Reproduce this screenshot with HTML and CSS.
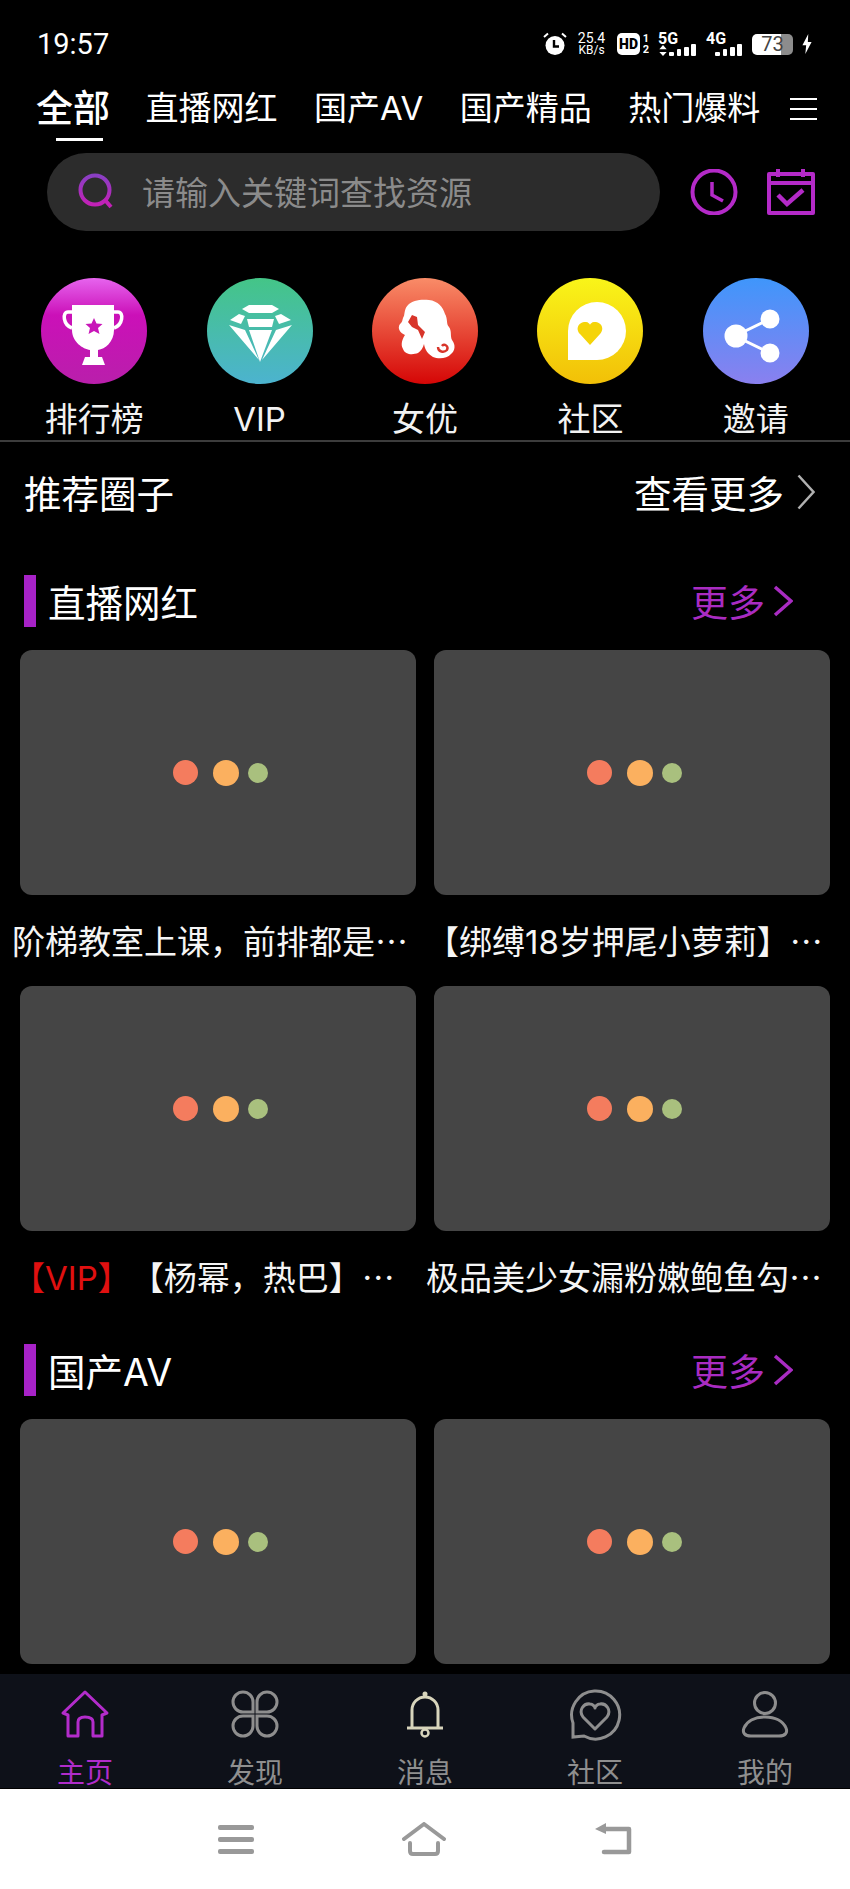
FILE: index.html
```html
<!DOCTYPE html>
<html lang="zh-CN">
<head>
    <meta charset="UTF-8">
    <meta name="viewport" content="width=device-width, initial-scale=1.0">
    <title>首页</title>
    <link rel="stylesheet" href="styles.css">
</head>
<body>

<!-- Status bar -->
<div class="status">
    <div class="time">19:57</div>
    <div class="status-right">
        <svg class="alarm" viewBox="0 0 24 24"><circle cx="12" cy="13.5" r="9.5" fill="#fff"/><path d="M1 5 L5 1.5 M23 5 L19 1.5" stroke="#fff" stroke-width="2"/><path d="M11 8 V14.5 H16" fill="none" stroke="#000" stroke-width="2.4"/></svg>
        <div class="speed"><span>25.4</span><span class="speed-unit">KB/s</span></div>
        <div class="hd">HD</div>
        <div class="sim"><span>1</span><span>2</span></div>
        <div class="net net-5g">
            <span class="net-name">5G</span>
            <div class="bars">
                <svg class="updown" viewBox="0 0 8 12"><path d="M4 0 L8 4.5 H0 Z M0 7.5 H8 L4 12 Z" fill="#fff"/></svg>
                <i class="b1"></i><i class="b2"></i><i class="b3"></i><i class="b4"></i>
            </div>
        </div>
        <div class="net net-4g">
            <span class="net-name">4G</span>
            <div class="bars"><i class="b1"></i><i class="b2"></i><i class="b3"></i><i class="b4"></i></div>
        </div>
        <div class="battery">73</div>
        <svg class="bolt" viewBox="0 0 12 24"><path d="M7.5 0 L0.5 13.5 H5 L4 24 L11.5 9.5 H7 Z" fill="#fff"/></svg>
    </div>
</div>

<!-- Category tabs -->
<div class="tabs">
    <div class="tab tab-active">全部</div>
    <div class="tab">直播网红</div>
    <div class="tab">国产AV</div>
    <div class="tab">国产精品</div>
    <div class="tab">热门爆料</div>
    <div class="tabs-menu"><i></i><i></i><i></i></div>
</div>

<!-- Search -->
<div class="search-row">
    <div class="search">
        <svg class="search-icon" viewBox="0 0 36 36"><defs><linearGradient id="sg" x1="0" y1="0" x2="0" y2="1"><stop offset="0" stop-color="#8a3fc4"/><stop offset="1" stop-color="#c221b6"/></linearGradient></defs><circle cx="17" cy="17" r="14.5" fill="none" stroke="url(#sg)" stroke-width="4"/><path d="M27 27 L33 34" stroke="#c221b6" stroke-width="4"/></svg>
        <span>请输入关键词查找资源</span>
    </div>
    <svg class="search-btn" viewBox="0 0 48 46"><circle cx="24" cy="23" r="21.5" fill="none" stroke="#b42ac8" stroke-width="4"/><path d="M22 13 V26 L33 32" fill="none" stroke="#b42ac8" stroke-width="3.5"/></svg>
    <svg class="search-btn search-btn-last" viewBox="0 0 48 46"><path d="M2 5 H46 V44 H2 Z M2 14 H46" fill="none" stroke="#b42ac8" stroke-width="4" stroke-linejoin="round"/><path d="M11 0 V8 M36 0 V8" stroke="#b42ac8" stroke-width="4"/><path d="M11 26 L20 35 L36 21" fill="none" stroke="#b42ac8" stroke-width="4.5"/></svg>
</div>

<div class="main">
    <!-- Shortcuts -->
    <div class="shortcuts">
        <div class="shortcut">
            <svg class="shortcut-icon" viewBox="0 0 106 106"><defs><linearGradient id="c1" x1="0" y1="0" x2="0" y2="1"><stop offset="0" stop-color="#e664ee"/><stop offset=".35" stop-color="#cb10b8"/><stop offset="1" stop-color="#b91fab"/></linearGradient></defs><circle cx="53" cy="53" r="53" fill="url(#c1)"/><path d="M31 27 H73 V52 C73 64 64 71 57 72 V79 H61 L64 87 H41 L44 79 H49 V72 C42 71 31 64 31 52 Z" fill="#fff"/><path d="M31 34 H27 C21 34 22 47 31 50 M73 34 H77 C83 34 82 47 73 50" fill="none" stroke="#fff" stroke-width="3.5"/><path d="M53 40 L55.5 45.5 L61.5 46 L57 50 L58.5 56 L53 53 L47.5 56 L49 50 L44.5 46 L50.5 45.5 Z" fill="#c815b8"/></svg>
            <div class="shortcut-label">排行榜</div>
        </div>
        <div class="shortcut">
            <svg class="shortcut-icon" viewBox="0 0 106 106"><defs><linearGradient id="c2" x1="0" y1="0" x2="0" y2="1"><stop offset="0" stop-color="#44c587"/><stop offset="1" stop-color="#4cb3cf"/></linearGradient></defs><circle cx="53" cy="53" r="53" fill="url(#c2)"/><path d="M35 31 L42 27 H65 L72 31 L65 35 H42 Z M32 36 L38 38 L34 46 L23 42 Z M74 36 L68 38 L72 46 L84 42 Z M40 41 H67 L65 49 H42 Z M42 52 H65 L53 84 Z M22 47 L38 52 L52 82 Z M85 47 L69 52 L55 82 Z" fill="#fff"/></svg>
            <div class="shortcut-label">VIP</div>
        </div>
        <div class="shortcut">
            <svg class="shortcut-icon" viewBox="0 0 106 106"><defs><linearGradient id="c3" x1="0" y1="0" x2="0" y2="1"><stop offset="0" stop-color="#f98c68"/><stop offset="1" stop-color="#d50606"/></linearGradient></defs><circle cx="53" cy="53" r="53" fill="url(#c3)"/><path d="M36 27 C40 22 50 21 57 22 C66 23 71 29 73 36 C76 41 74 46 77 49 C80 53 78 58 80 62 C84 67 83 73 79 76 C75 81 66 81 61 79 C56 76 53 72 52 66 C51 70 49 73 46 75 C41 77 33 77 31 71 C28 66 31 60 33 57 C28 55 25 50 28 46 C31 44 30 41 32 38 C33 33 33 30 36 27 Z" fill="#fff"/><path d="M40 37 L45 39 L46 47 L53 54 L50 61 L46 52 L40 49 L36 44 Z" fill="#d8352a"/><path d="M66 69 C66 74 72 75 75 72 C77 68 72 65 70 68" fill="none" stroke="#d8352a" stroke-width="2.4"/></svg>
            <div class="shortcut-label">女优</div>
        </div>
        <div class="shortcut">
            <svg class="shortcut-icon" viewBox="0 0 106 106"><defs><linearGradient id="c4" x1="0" y1="0" x2="0" y2="1"><stop offset="0" stop-color="#f9f519"/><stop offset="1" stop-color="#f2c007"/></linearGradient></defs><circle cx="53" cy="53" r="53" fill="url(#c4)"/><path d="M31 82 V53 A29 29 0 1 1 60 82 Z" fill="#fff"/><path d="M53 67 L43 56 C37 49 44 43 49 44 C51 44 53 46 53 47 C53 46 55 44 57 44 C62 43 69 49 63 56 Z" fill="#f5d409"/></svg>
            <div class="shortcut-label">社区</div>
        </div>
        <div class="shortcut">
            <svg class="shortcut-icon" viewBox="0 0 106 106"><defs><linearGradient id="c5" x1="0" y1="0" x2="0" y2="1"><stop offset="0" stop-color="#3f96fb"/><stop offset="1" stop-color="#8a80ef"/></linearGradient></defs><circle cx="53" cy="53" r="53" fill="url(#c5)"/><path d="M67 41 L32 58 L67 75" fill="none" stroke="#fff" stroke-width="3"/><circle cx="67" cy="41" r="9.5" fill="#fff"/><circle cx="33" cy="58" r="11.5" fill="#fff"/><circle cx="67" cy="75" r="9.5" fill="#fff"/></svg>
            <div class="shortcut-label">邀请</div>
        </div>
    </div>

    <!-- Recommended circles -->
    <div class="rec">
        <div class="rec-title">推荐圈子</div>
        <div class="rec-more">查看更多
            <svg class="rec-arrow" viewBox="0 0 18 36"><path d="M1.5 1.5 L16.5 18 L1.5 34.5" fill="none" stroke="#b0b0b0" stroke-width="2.5"/></svg>
        </div>
    </div>

    <!-- Section: live -->
    <div class="section-head">
        <div class="section-bar"></div>
        <div class="section-title">直播网红</div>
        <div class="section-more">更多
            <svg class="section-arrow" viewBox="0 0 20 32"><path d="M2 2 L18 16 L2 30" fill="none" stroke="#a92cc2" stroke-width="3.5"/></svg>
        </div>
    </div>
    <div class="cards">
        <div class="card">
            <div class="thumb"><i class="dot dot-a"></i><i class="dot dot-b"></i><i class="dot dot-c"></i></div>
            <div class="caption">阶梯教室上课，前排都是<span class="cut">…</span></div>
        </div>
        <div class="card">
            <div class="thumb"><i class="dot dot-a"></i><i class="dot dot-b"></i><i class="dot dot-c"></i></div>
            <div class="caption">【绑缚18岁押尾小萝莉】<span class="cut">…</span></div>
        </div>
        <div class="card">
            <div class="thumb"><i class="dot dot-a"></i><i class="dot dot-b"></i><i class="dot dot-c"></i></div>
            <div class="caption"><span class="red">【VIP】</span>【杨幂，热巴】<span class="cut">…</span></div>
        </div>
        <div class="card">
            <div class="thumb"><i class="dot dot-a"></i><i class="dot dot-b"></i><i class="dot dot-c"></i></div>
            <div class="caption">极品美少女漏粉嫩鲍鱼勾<span class="cut">…</span></div>
        </div>
    </div>

    <!-- Section: AV -->
    <div class="section-head">
        <div class="section-bar"></div>
        <div class="section-title">国产AV</div>
        <div class="section-more">更多
            <svg class="section-arrow" viewBox="0 0 20 32"><path d="M2 2 L18 16 L2 30" fill="none" stroke="#a92cc2" stroke-width="3.5"/></svg>
        </div>
    </div>
    <div class="cards">
        <div class="card">
            <div class="thumb"><i class="dot dot-a"></i><i class="dot dot-b"></i><i class="dot dot-c"></i></div>
        </div>
        <div class="card">
            <div class="thumb"><i class="dot dot-a"></i><i class="dot dot-b"></i><i class="dot dot-c"></i></div>
        </div>
    </div>
</div>

<!-- Bottom tabs -->
<div class="tabbar">
    <div class="tabbar-item tabbar-active">
        <svg class="tabbar-icon" viewBox="0 0 60 56"><path d="M13 29 L8 27 L30 6 L52 27 L47 29 V50 H38 V36 C38 32 34 31 30 31 C26 31 23 32 23 36 V50 H13 Z" fill="none" stroke="#b32ccb" stroke-width="3" stroke-linejoin="round"/></svg>
        <span>主页</span>
    </div>
    <div class="tabbar-item">
        <svg class="tabbar-icon" viewBox="0 0 60 56"><path d="M28 26 H18 A10 10 0 1 1 28 16 Z M32 26 V16 A10 10 0 1 1 42 26 Z M28 30 V40 A10 10 0 1 1 18 30 Z M32 30 H42 A10 10 0 1 1 32 40 Z" fill="none" stroke="#8e8e8e" stroke-width="3"/></svg>
        <span>发现</span>
    </div>
    <div class="tabbar-item">
        <svg class="tabbar-icon" viewBox="0 0 60 56"><path d="M17 41 V24 A13 13 0 0 1 43 24 V41 M12 42 H48" fill="none" stroke="#d8d5bc" stroke-width="3"/><circle cx="30" cy="8" r="2.5" fill="#d8d5bc"/><circle cx="30" cy="47" r="3.5" fill="none" stroke="#d8d5bc" stroke-width="2.5"/></svg>
        <span>消息</span>
    </div>
    <div class="tabbar-item">
        <svg class="tabbar-icon" viewBox="0 0 60 56"><path d="M8 51 V37 A24 24 0 1 1 19 50 Z" fill="none" stroke="#8e8e8e" stroke-width="3"/><path d="M30 43 L18 31 C13 24 19 17 25 18 C28 18 30 21 30 22 C30 21 32 18 35 18 C41 17 47 24 42 31 Z" fill="none" stroke="#8e8e8e" stroke-width="3" stroke-linejoin="round"/></svg>
        <span>社区</span>
    </div>
    <div class="tabbar-item">
        <svg class="tabbar-icon" viewBox="0 0 60 56"><circle cx="30" cy="17" r="10.5" fill="none" stroke="#8e8e8e" stroke-width="3"/><path d="M16 50 H44 C50 50 53 47 51 42 C48 35 40 31 30 31 C20 31 12 35 9 42 C7 47 10 50 16 50 Z" fill="none" stroke="#8e8e8e" stroke-width="3"/></svg>
        <span>我的</span>
    </div>
</div>

<!-- Phone navigation -->
<div class="navbar">
    <div class="nav-menu"><i></i><i></i><i></i></div>
    <svg class="nav-home" viewBox="0 0 44 34"><path d="M2 17 L22 2 L42 17" fill="none" stroke="#999" stroke-width="4" stroke-linecap="round" stroke-linejoin="round"/><path d="M8 21 V29 Q8 32 11 32 H33 Q36 32 36 29 V21" fill="none" stroke="#999" stroke-width="4" stroke-linecap="round"/></svg>
    <svg class="nav-back" viewBox="0 0 38 32"><path d="M10 6 H35 V29 H10" fill="none" stroke="#999" stroke-width="4.5" stroke-linecap="round" stroke-linejoin="round"/><path d="M1 6 L12 0 V11 Z" fill="#999"/></svg>
</div>

</body>
</html>
```

FILE: styles.css
```css
* {
    box-sizing: border-box;
}
body {
    margin: 0;
    width: 850px;
    height: 1889px;
    overflow: hidden;
    display: flex;
    flex-direction: column;
    background-color: #000;
    color: #fff;
    font-family: Inter, "Noto Sans CJK SC", sans-serif;
    text-spacing-trim: space-all;
}
i {
    display: block;
}

/* Status bar */
.status {
    height: 72px;
    flex-shrink: 0;
    padding: 16px 38px 0 37px;
    display: flex;
    align-items: center;
    font-family: Roboto, sans-serif;
}
.time {
    font-size: 29px;
}
.status-right {
    margin-left: auto;
    display: flex;
    align-items: center;
}
.alarm {
    width: 24px;
    height: 24px;
}
.speed {
    margin-left: 10px;
    width: 29px;
    display: flex;
    flex-direction: column;
    align-items: center;
    font-size: 14px;
    line-height: 12px;
}
.speed-unit {
    font-size: 12px;
}
.hd {
    margin-left: 11px;
    width: 23px;
    height: 22px;
    border-radius: 5px;
    background-color: #fff;
    color: #000;
    font-size: 14px;
    font-weight: 900;
    line-height: 22px;
    text-align: center;
}
.sim {
    margin-left: 2px;
    width: 8px;
    display: flex;
    flex-direction: column;
    align-items: center;
    font-size: 11px;
    font-weight: 700;
    line-height: 11px;
}
.sim span {
    height: 11px;
    overflow: hidden;
}
.net {
    display: flex;
    flex-direction: column;
    height: 23px;
}
.net-5g {
    width: 38px;
    margin-left: 8px;
}
.net-4g {
    width: 36px;
    margin-left: 10px;
}
.net-name {
    font-size: 16px;
    font-weight: 700;
    line-height: 11px;
}
.bars {
    display: flex;
    align-items: flex-end;
    justify-content: flex-end;
    gap: 2.6px;
    height: 12px;
}
.updown {
    width: 8px;
    height: 11px;
}
.bars i {
    width: 4.7px;
    border-radius: 1px;
    background-color: #fff;
}
.b1 {
    height: 4px;
}
.b2 {
    height: 7px;
}
.b3 {
    height: 9px;
}
.b4 {
    height: 12px;
}
.battery {
    margin-left: 10px;
    width: 41px;
    height: 21px;
    border-radius: 5px;
    background: linear-gradient(to right, #fff 70%, #8c8c8c 70%);
    color: #444;
    font-size: 20px;
    line-height: 21px;
    text-align: center;
}
.bolt {
    margin-left: 9px;
    width: 10px;
    height: 20px;
}

/* Category tabs */
.tabs {
    height: 71px;
    flex-shrink: 0;
    padding: 16px 34px 0 36px;
    display: flex;
    align-items: flex-start;
    gap: 36.5px;
}
.tab {
    font-size: 33px;
    line-height: 40px;
    white-space: nowrap;
}
.tab-active {
    margin: -1px -1px 0 0;
    font-size: 37px;
    line-height: 44px;
    font-weight: 500;
}
.tab-active::after {
    content: "";
    display: block;
    width: 47px;
    height: 3px;
    margin: 7px 0 0 20px;
    background-color: #fff;
}
.tabs-menu {
    margin-left: -7px;
    padding-top: 10px;
    width: 27px;
    display: flex;
    flex-direction: column;
    gap: 8px;
    flex-shrink: 0;
}
.tabs-menu i {
    height: 2px;
    background-color: #fff;
}

/* Search */
.search-row {
    height: 78px;
    margin-top: 10px;
    flex-shrink: 0;
    padding-left: 47px;
    display: flex;
    align-items: center;
}
.search {
    width: 613px;
    height: 78px;
    padding: 0 0 2px 31px;
    border-radius: 39px;
    background-color: #2c2c2c;
    display: flex;
    align-items: center;
    gap: 28px;
    color: #8b8b8b;
    font-size: 33px;
}
.search-icon {
    width: 36px;
    height: 36px;
}
.search-btn {
    width: 48px;
    height: 46px;
    margin-left: 30px;
}
.search-btn-last {
    margin-left: 29px;
}

/* Shortcuts */
.main {
    flex: 1;
    overflow: hidden;
}
.shortcuts {
    padding: 47px 11.5px 0;
    display: grid;
    grid-template-columns: repeat(5, 1fr);
    height: 211px;
    border-bottom: 2px solid #3c3c3c;
}
.shortcut {
    display: flex;
    flex-direction: column;
    align-items: center;
}
.shortcut-icon {
    width: 106px;
    height: 106px;
}
.shortcut-label {
    margin-top: 15px;
    font-size: 33px;
    line-height: 40px;
    color: #f2f2f2;
}

/* Recommended */
.rec {
    height: 100px;
    margin-bottom: 33px;
    padding: 0 35px 1px 24px;
    display: flex;
    align-items: center;
    justify-content: space-between;
    font-size: 37.5px;
}
.rec-more {
    display: flex;
    align-items: center;
    gap: 13px;
}
.rec-arrow {
    width: 18px;
    height: 36px;
}

/* Sections */
.section-head {
    height: 52px;
    margin-top: 22px;
    margin-bottom: 23px;
    padding: 0 57px 0 24px;
    display: flex;
    align-items: center;
    gap: 12px;
}
.section-bar {
    width: 12px;
    height: 52px;
    background-color: #a722c7;
}
.section-title {
    margin-top: -2px;
    font-size: 37.5px;
}
.section-more {
    margin-left: auto;
    display: flex;
    align-items: center;
    gap: 8px;
    font-size: 37px;
    color: #a92cc2;
}
.section-arrow {
    width: 20px;
    height: 32px;
}
.cards {
    padding: 0 20px;
    display: grid;
    grid-template-columns: repeat(2, 1fr);
    column-gap: 18px;
}
.thumb {
    height: 245px;
    padding-left: 5px;
    border-radius: 12px;
    background-color: #454545;
    display: flex;
    align-items: center;
    justify-content: center;
}
.dot {
    border-radius: 50%;
}
.dot-a {
    width: 25px;
    height: 25px;
    background-color: #f47c5e;
}
.dot-b {
    width: 26px;
    height: 26px;
    margin-left: 15px;
    background-color: #fbb05f;
}
.dot-c {
    width: 20px;
    height: 20px;
    margin-left: 9px;
    background-color: #a9c07e;
}
.caption {
    width: 396px;
    height: 91px;
    margin-left: -8px;
    padding-top: 26px;
    font-size: 33px;
    line-height: 38px;
    white-space: nowrap;
    color: #f5f5f5;
}
.cut {
    font-family: "Noto Sans CJK SC", sans-serif;
}
.red {
    color: #e01010;
}

/* Bottom tabs */
.tabbar {
    height: 115px;
    flex-shrink: 0;
    padding-top: 12px;
    display: grid;
    grid-template-columns: repeat(5, 1fr);
    background-color: #0e1119;
    border-bottom: 1px solid #000;
}
.tabbar-item {
    display: flex;
    flex-direction: column;
    align-items: center;
    font-size: 28px;
    line-height: 30px;
    color: #8f8f8f;
}
.tabbar-active {
    color: #b02ccb;
}
.tabbar-icon {
    width: 60px;
    height: 56px;
    margin-bottom: 16px;
}

/* Phone navigation */
.navbar {
    height: 100px;
    flex-shrink: 0;
    background-color: #fff;
    display: flex;
    align-items: center;
    justify-content: center;
    gap: 148px;
}
.nav-menu {
    width: 36px;
    display: flex;
    flex-direction: column;
    gap: 7px;
}
.nav-menu i {
    height: 5px;
    border-radius: 2px;
    background-color: #999;
}
.nav-home {
    width: 44px;
    height: 34px;
}
.nav-back {
    width: 38px;
    height: 32px;
}
```
